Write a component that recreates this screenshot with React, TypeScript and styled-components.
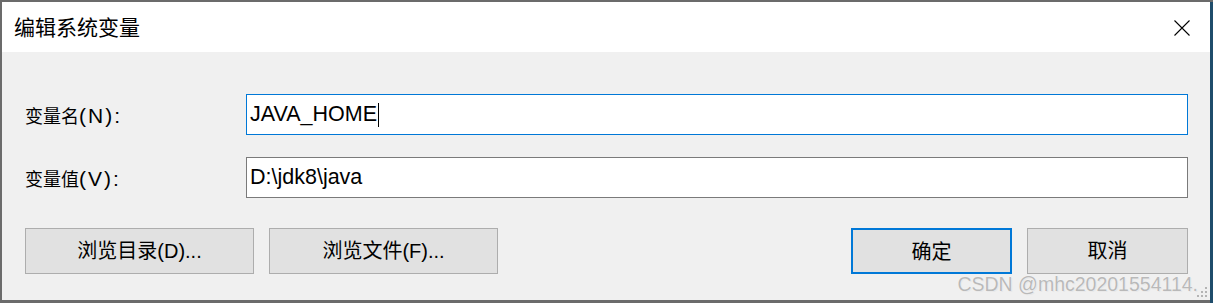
import React, { FC } from 'react';
import styled, { createGlobalStyle } from 'styled-components';

const GlobalStyle = createGlobalStyle`
  html, body {
    margin: 0;
    padding: 0;
    background: #6b6b6b;
    overflow: hidden;
  }
  #root {
    width: 1213px;
    height: 303px;
  }
`;

const cjk = `'Noto Sans CJK SC', 'Liberation Sans', sans-serif`;

const Desktop = styled.div`
  display: flex;
  width: 1213px;
  height: 303px;
  padding: 2px 0 0 2px;
  box-sizing: border-box;
  background: #6b6b6b;
`;

const RightEdge = styled.div`
  width: 3px;
  align-self: stretch;
  background: #1f4d6b;
`;

const Dialog = styled.div`
  position: relative;
  display: flex;
  flex-direction: column;
  width: 1208px;
  height: 298px;
  background: #f0f0f0;
  font-family: ${cjk};
  color: #000;
`;

const TitleBar = styled.div`
  display: flex;
  align-items: center;
  justify-content: space-between;
  height: 50px;
  padding: 0 20px 0 12px;
  background: #ffffff;
`;

const Title = styled.div`
  font-size: 21px;
  line-height: 1;
  margin-top: -2px;
`;

const CloseButton = styled.div`
  display: flex;
  align-items: center;
  justify-content: center;
  width: 16px;
  height: 16px;
  margin-top: 2px;
`;

const Body = styled.div`
  display: flex;
  flex-direction: column;
  padding: 42px 22px 0 23px;
`;

const Field = styled.div<{ $gap: number }>`
  display: flex;
  align-items: center;
  margin-bottom: ${p => p.$gap}px;
`;

const Label = styled.div`
  display: flex;
  align-items: baseline;
  width: 221px;
  font-size: 18px;
`;

// latin part of a label or button caption, drawn larger as in the Windows UI font
const Latin = styled.span<{ $size: number; $spacing?: number }>`
  font-family: 'Liberation Sans', sans-serif;
  font-size: ${p => p.$size}px;
  letter-spacing: ${p => p.$spacing ?? 0}px;
`;

const TextBox = styled.div<{ $focused?: boolean }>`
  flex: 1;
  display: flex;
  align-items: center;
  height: 41px;
  box-sizing: border-box;
  padding-left: 3px;
  background: #ffffff;
  border: 1px solid ${p => (p.$focused ? '#0078d7' : '#7a7a7a')};
  font-family: 'Liberation Sans', ${cjk};
  font-size: 21.5px;
`;

const Caret = styled.span`
  display: inline-block;
  width: 1px;
  height: 24px;
  margin-left: 1px;
  background: #000;
`;

const ButtonRow = styled.div`
  display: flex;
  justify-content: space-between;
  margin-top: 8px;
`;

const ButtonGroup = styled.div`
  display: flex;
  gap: 15px;
`;

const Button = styled.div<{ $width: number; $focused?: boolean }>`
  display: flex;
  align-items: baseline;
  justify-content: center;
  padding-top: 9px;
  width: ${p => p.$width}px;
  height: 46px;
  box-sizing: border-box;
  background: #e1e1e1;
  border: ${p => (p.$focused ? '2px solid #0078d7' : '1px solid #adadad')};
  font-size: 20px;
  line-height: 24px;
`;

const Watermark = styled.div`
  position: absolute;
  right: 12px;
  bottom: 4px;
  font-family: 'Liberation Sans', sans-serif;
  font-size: 19.5px;
  color: #b9b9b9;
  text-shadow: 0 0 1px #ffffff, 1px 1px 0 #e8e8e8;
  pointer-events: none;
`;

const Grip = styled.svg`
  position: absolute;
  right: 1px;
  bottom: 1px;
`;

const App: FC = () => {
  return (
    <>
      <GlobalStyle />
      <Desktop>
        <Dialog>
          <TitleBar>
            <Title>编辑系统变量</Title>
            <CloseButton>
              <svg width="16" height="16" viewBox="0 0 16 16">
                <path d="M0.5 0.5 L15.5 15.5 M15.5 0.5 L0.5 15.5" stroke="#000" strokeWidth="1.1" fill="none" />
              </svg>
            </CloseButton>
          </TitleBar>
          <Body>
            <Field $gap={22}>
              <Label>
                变量名<Latin $size={21} $spacing={2}>(N):</Latin>
              </Label>
              <TextBox $focused>
                JAVA_HOME<Caret />
              </TextBox>
            </Field>
            <Field $gap={22}>
              <Label>
                变量值<Latin $size={21} $spacing={2}>(V):</Latin>
              </Label>
              <TextBox>D:\jdk8\java</TextBox>
            </Field>
            <ButtonRow>
              <ButtonGroup>
                <Button $width={229}>
                  浏览目录<Latin $size={20}>(D)...</Latin>
                </Button>
                <Button $width={229}>
                  浏览文件<Latin $size={20}>(F)...</Latin>
                </Button>
              </ButtonGroup>
              <ButtonGroup>
                <Button $width={161} $focused>确定</Button>
                <Button $width={161}>取消</Button>
              </ButtonGroup>
            </ButtonRow>
          </Body>
          <Watermark>CSDN @mhc20201554114.</Watermark>
          <Grip width="14" height="14" viewBox="0 0 14 14">
            {[[10, 2], [6, 6], [10, 6], [2, 10], [6, 10], [10, 10]].map(([x, y]) => (
              <rect key={`${x}-${y}`} x={x} y={y} width="2" height="2" fill="#b4b4b4" />
            ))}
          </Grip>
        </Dialog>
        <RightEdge />
      </Desktop>
    </>
  );
};

export default App;
